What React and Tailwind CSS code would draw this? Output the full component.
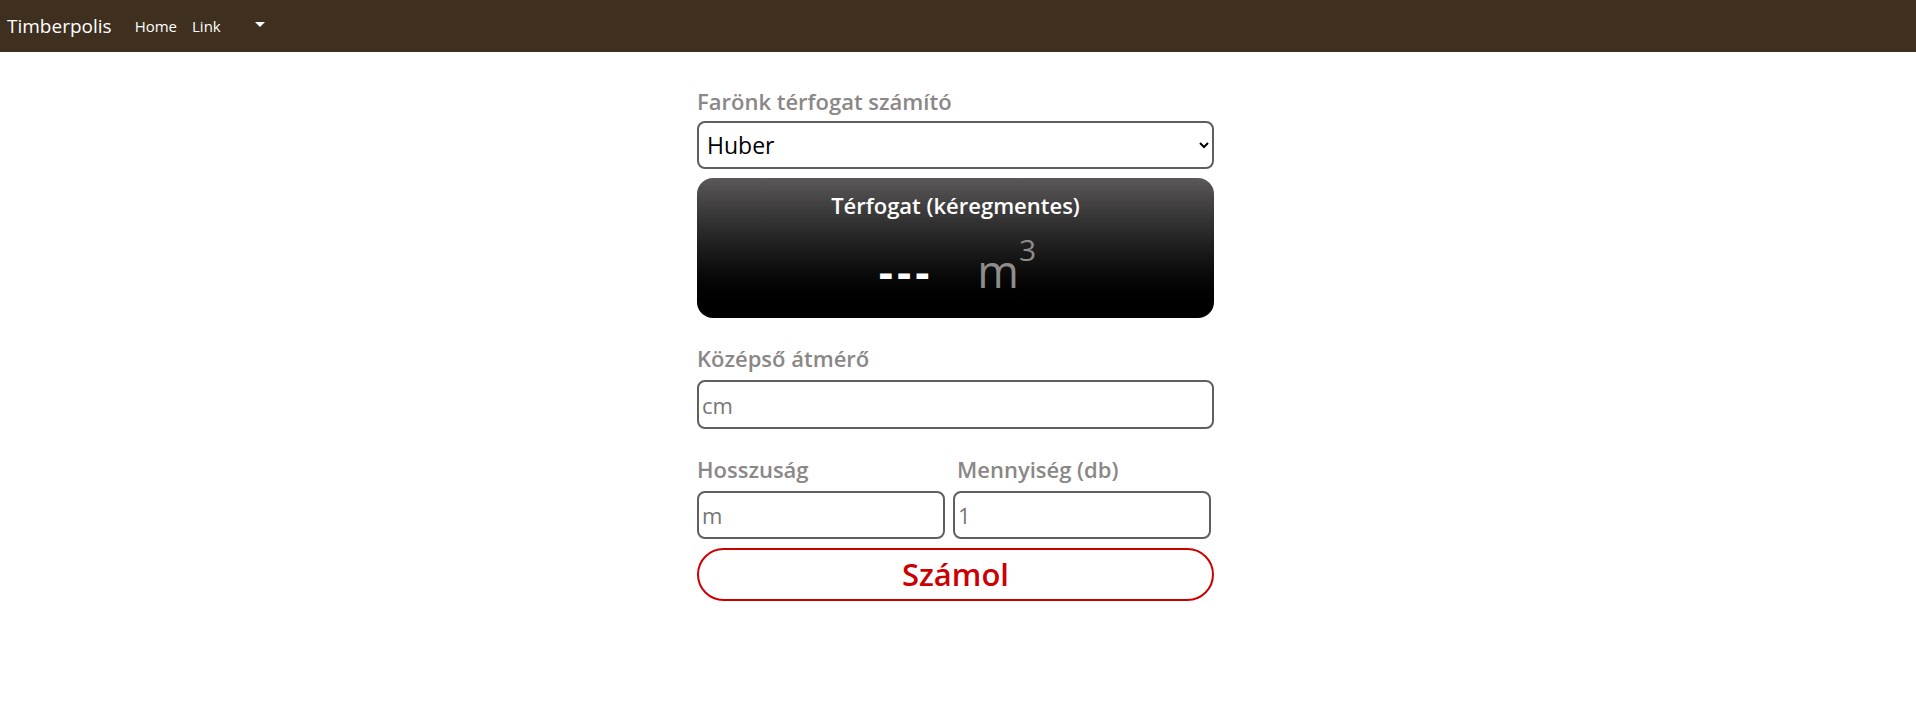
import React, { useState } from "react";

function NavBar() {
  return (
    <nav className="h-[52px] bg-[#3e2f1f] flex items-center px-[7px]">
      <span className="text-white text-[19px] mr-[23px]">Timberpolis</span>
      <a className="text-white text-[15px] mr-[15px]" href="#">Home</a>
      <a className="text-white text-[15px]" href="#">Link</a>
      <span className="ml-[34px] w-0 h-0 border-l-[5px] border-r-[5px] border-t-[5px] border-l-transparent border-r-transparent border-t-white mb-[4px]" />
    </nav>
  );
}

function App() {
  const [method, setMethod] = useState("Huber");

  return (
    <div className="min-h-[728px] bg-white" style={{ fontFamily: '"Open Sans", sans-serif' }}>
      <NavBar />
      <div className="flex justify-center pr-[5px]">
        <div className="w-[517px] pt-[34px]">
          <label className="block text-[22px] font-semibold text-[#8a8786] leading-[30px] mb-[5px]">
            Farönk térfogat számító
          </label>
          <select
            value={method}
            onChange={(e) => setMethod(e.target.value)}
            className="w-full h-[48px] border-2 border-[#5f5f5f] rounded-[8px] px-[4px] text-[23px] text-black bg-white"
          >
            <option>Huber</option>
            <option>Smalian</option>
            <option>Newton</option>
          </select>

          <div className="mt-[9px] h-[140px] rounded-[16px] bg-gradient-to-b from-[#5a5859] to-[#000000] flex flex-col items-center">
            <div className="text-white text-[22px] font-semibold leading-[30px] mt-[12px]">Térfogat (kéregmentes)</div>
            <div className="flex items-baseline mt-[26px] h-[50px] leading-[50px] pl-[4px]">
              <span className="text-white text-[44px] font-bold tracking-[4px]">---</span>
              <span className="text-[#8f8c8b] text-[45px] font-normal ml-[44px]">
                m<sup className="text-[30px] leading-none align-[12px]">3</sup>
              </span>
            </div>
          </div>

          <label className="block text-[22px] font-semibold text-[#8a8786] leading-[30px] mt-[25px] mb-[7px]">
            Középső átmérő
          </label>
          <input
            placeholder="cm"
            className="w-full h-[49px] border-2 border-[#5f5f5f] rounded-[8px] px-[3px] text-[22px] placeholder-[#777777] outline-none"
          />

          <div className="grid grid-cols-[248px_258px] gap-x-[8px] mt-[25px]">
            <label className="block text-[22px] font-semibold text-[#8a8786] leading-[30px] mb-[7px]">Hosszuság</label>
            <label className="block text-[22px] font-semibold text-[#8a8786] leading-[30px] mb-[7px] pl-[4px]">Mennyiség (db)</label>
            <input
              placeholder="m"
              className="w-full h-[48px] border-2 border-[#5f5f5f] rounded-[8px] px-[3px] text-[22px] placeholder-[#777777] outline-none"
            />
            <input
              placeholder="1"
              className="w-full h-[48px] border-2 border-[#5f5f5f] rounded-[8px] px-[3px] text-[22px] placeholder-[#777777] outline-none"
            />
          </div>

          <button className="w-full h-[53px] mt-[9px] border-2 border-[#cc0000] rounded-full text-[#cc0000] text-[31px] font-semibold bg-white">
            Számol
          </button>
        </div>
      </div>
    </div>
  );
}

export default App;
